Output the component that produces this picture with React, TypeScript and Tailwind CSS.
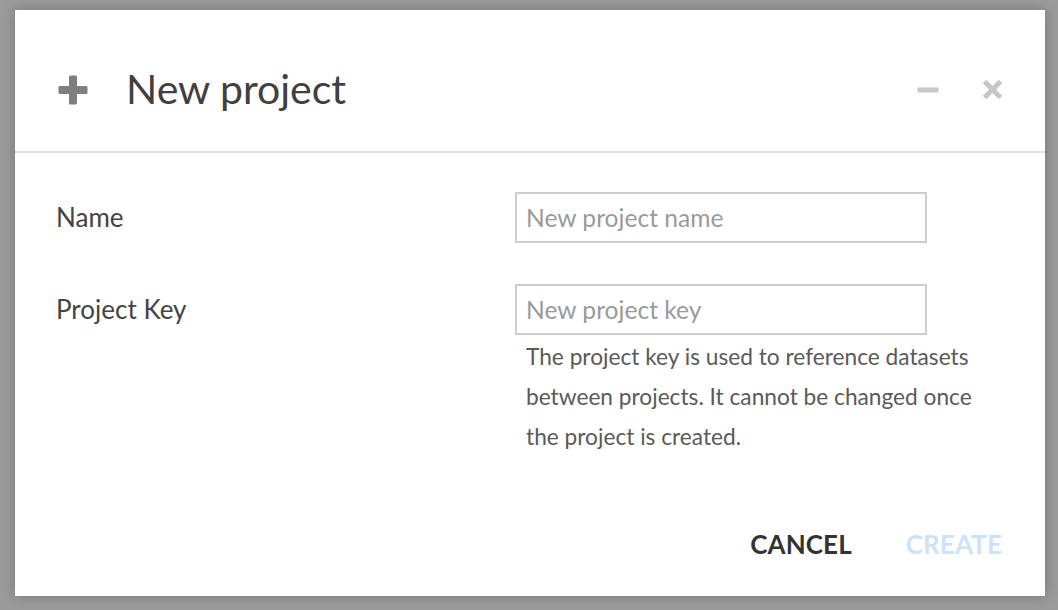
import React from "react";

const font = { fontFamily: "Lato, 'Open Sans', sans-serif" };

function PlusIcon() {
  return (
    <svg width="30" height="30" viewBox="0 0 30 30">
      <rect x="0.5" y="11" width="29" height="8" rx="1.5" fill="#7f7f7f" />
      <rect x="11" y="0.5" width="8" height="29" rx="1.5" fill="#7f7f7f" />
    </svg>
  );
}

function MinusIcon() {
  return (
    <svg width="22" height="6" viewBox="0 0 22 6">
      <rect x="0.5" y="0.5" width="21" height="5" fill="#c8c8c8" />
    </svg>
  );
}

function CloseIcon() {
  return (
    <svg width="21" height="21" viewBox="0 0 21 21">
      <path d="M2.5 2.5 L18.5 18.5 M18.5 2.5 L2.5 18.5" stroke="#c6c6c6" strokeWidth="5" strokeLinecap="butt" />
    </svg>
  );
}

export default function App() {
  return (
    <div
      className="w-[1058px] h-[610px] bg-[#9b9b9b] pl-[15px] pt-[10px] overflow-hidden"
      style={font}
    >
      <div className="w-[1030px] h-[586px] bg-white flex flex-col shadow-[0_0_12px_rgba(0,0,0,0.25)]">
        <div className="h-[143px] border-b-2 border-[#e2e2e2] flex items-center pl-[43px] pr-[42px] pt-[18px] shrink-0">
          <PlusIcon />
          <div className="ml-[38px] text-[41px] text-[#404040] leading-none pb-[2px]">New project</div>
          <div className="ml-auto flex items-center">
            <MinusIcon />
            <div className="ml-[43px]">
              <CloseIcon />
            </div>
          </div>
        </div>
        <div className="flex flex-col pl-[41px] pt-[39px]">
          <div className="flex items-center">
            <div className="w-[459px] text-[26px] text-[#444]">Name</div>
            <input
              className="w-[412px] h-[51px] border-2 border-[#cdcdcd] px-[9px] text-[24.6px] text-[#444] placeholder:text-[#9a9a9a] outline-none"
              placeholder="New project name"
              style={font}
            />
          </div>
          <div className="flex items-start mt-[41px]">
            <div className="w-[459px] h-[51px] flex items-center text-[26px] text-[#444]">Project Key</div>
            <div className="flex flex-col">
              <input
                className="w-[412px] h-[51px] border-2 border-[#cdcdcd] px-[9px] text-[24.6px] text-[#444] placeholder:text-[#9a9a9a] outline-none"
                placeholder="New project key"
                style={font}
              />
              <div className="pl-[11px] pt-[2px] w-[480px] text-[22.7px] leading-[40px] text-[#5a5a5a]">
                The project key is used to reference datasets<br />between projects. It cannot be changed once<br />the project is created.
              </div>
            </div>
          </div>
        </div>
        <div className="mt-auto flex items-center justify-end pr-[43px] pb-[32px] gap-[54px]">
          <button className="text-[26px] font-bold text-[#333] tracking-[0.1px]" style={font}>CANCEL</button>
          <button className="text-[26px] font-bold text-[#cce2fb] tracking-[0.1px]" style={font}>CREATE</button>
        </div>
      </div>
    </div>
  );
}
